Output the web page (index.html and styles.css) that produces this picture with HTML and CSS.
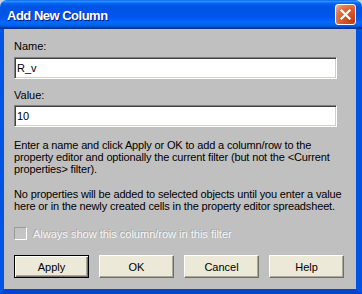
FILE: index.html
```html
<!DOCTYPE html>
<html lang="en">
<head>
    <meta charset="UTF-8">
    <title>Add New Column</title>
    <link rel="stylesheet" href="styles.css">
</head>
<body>
    <!-- dialog -->
    <div class="window">
        <div class="titlebar">
            <span class="title">Add New Column</span>
            <span class="close">
                <svg width="13" height="13" viewBox="0 0 13 13">
                    <path d="M2.5 2.5 L10.5 10.5 M10.5 2.5 L2.5 10.5" stroke="#fff" stroke-width="2.2" stroke-linecap="square"/>
                </svg>
            </span>
        </div>
        <div class="content">
            <label class="field-label">Name:</label>
            <input class="field" type="text" value="R_v">
            <label class="field-label value-label">Value:</label>
            <input class="field value-field" type="text" value="10">

            <p class="note">Enter a name and click Apply or OK to add a column/row to the<br>property editor and optionally the current filter (but not the &lt;Current<br>properties&gt; filter).</p>
            <p class="note second">No properties will be added to selected objects until you enter a value<br>here or in the newly created cells in the property editor spreadsheet.</p>

            <div class="check-row">
                <span class="check"></span>
                <span class="check-text">Always show this column/row in this filter</span>
            </div>

            <div class="buttons">
                <button class="btn default">Apply</button>
                <button class="btn">OK</button>
                <button class="btn">Cancel</button>
                <button class="btn">Help</button>
            </div>
        </div>
    </div>
</body>
</html>
```
FILE: styles.css
```css
*{
    margin: 0;
    padding: 0;
    box-sizing: border-box;
}
html, body{
    width: 362px;
    height: 294px;
    background: #c8d0e0;
    overflow: hidden;
}
.window{
    width: 362px;
    height: 294px;
    display: flex;
    flex-direction: column;
    border-radius: 7px 7px 0 0;
    overflow: hidden;
    font-family: "Liberation Sans", Arial, sans-serif;
    font-size: 11px;
    color: #000;
}
.titlebar{
    height: 29px;
    flex: none;
    display: flex;
    align-items: center;
    justify-content: space-between;
    padding: 0 6px 0 7px;
    background: linear-gradient(to bottom, #0058ee 0%, #3593ff 4%, #288eff 6%, #127dff 8%, #036ffc 10%, #0262ee 14%, #0057e5 20%, #0054e3 24%, #0055eb 56%, #005bf5 66%, #026afe 76%, #0062ef 86%, #0052d6 92%, #0040ab 94%, #003092 100%);
}
.title{
    color: #fff;
    font-weight: bold;
    font-size: 13px;
    letter-spacing: -0.5px;
    text-shadow: 1px 1px 0 #0a1883;
    padding-top: 1px;
}
.close{
    width: 21px;
    height: 21px;
    display: flex;
    align-items: center;
    justify-content: center;
    border: 1px solid #fff;
    border-radius: 3px;
    background: radial-gradient(circle at 85% 85%, #c83c15 0, #dd5a30 50%, #e87a55 75%, #f7b9a2 100%);
}
.content{
    flex: 1;
    min-height: 0;
    display: flex;
    flex-direction: column;
    align-items: flex-start;
    background: #c0c0c0;
    border-left: 4px solid #0054e3;
    border-right: 6px solid #0054e3;
    border-bottom: 5px solid #0843cf;
    padding: 11px 12px 11px 10px;
}
.field-label{
    line-height: 13px;
}
.value-label{
    margin-top: 10px;
}
.field{
    display: block;
    width: 323px;
    height: 22px;
    margin-top: 4px;
    padding: 0 2px;
    font-family: inherit;
    font-size: 11px;
    color: #000;
    background: #fff;
    border: 1px solid;
    border-color: #808080 #fff #fff #808080;
    box-shadow: inset 1px 1px 0 #404040, inset -1px -1px 0 #d4d0c8;
    outline: none;
}
.value-field{
    margin-top: 3px;
}
.note{
    margin-top: 12px;
    line-height: 12px;
    white-space: nowrap;
    letter-spacing: -0.15px;
}
.note.second{
    margin-top: 13px;
}
.check-row{
    margin-top: 15px;
    height: 13px;
    display: flex;
    align-items: center;
    gap: 6px;
}
.check{
    width: 13px;
    height: 13px;
    background: #c4c4c4;
    border: 1px solid;
    border-color: #9a9a9a #fff #fff #9a9a9a;
}
.check-text{
    color: #f6f6f6;
    text-shadow: -1px -1px 0 #a6a6a6;
}
.buttons{
    margin-top: 15px;
    width: 330px;
    display: flex;
    justify-content: space-between;
}
.btn{
    width: 75px;
    height: 23px;
    font-family: inherit;
    font-size: 11px;
    color: #000;
    background: #ece9d8;
    border: 1px solid;
    border-color: #fff #716f64 #716f64 #fff;
    box-shadow: inset -1px -1px 0 #aca899;
}
.btn.default{
    border: 1px solid #000;
    box-shadow: inset 1px 1px 0 #fff, inset -1px -1px 0 #716f64, inset -2px -2px 0 #aca899;
}
```
